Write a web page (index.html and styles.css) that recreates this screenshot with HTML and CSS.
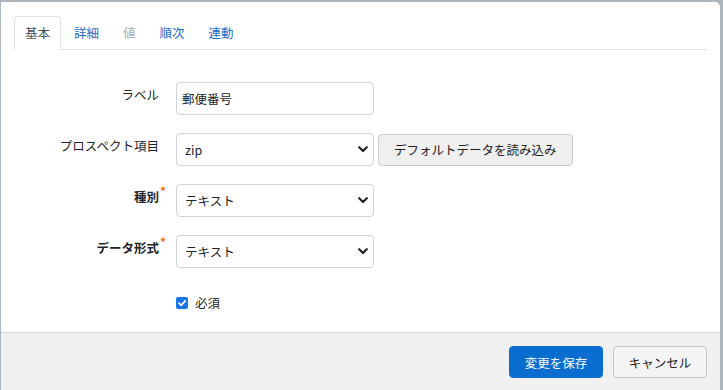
FILE: index.html
```html
<!DOCTYPE html>
<html lang="ja">
<head>
<meta charset="utf-8">
<link rel="stylesheet" href="styles.css">
</head>
<body>
<div class="dialog">
  <div class="dialog-body">
    <ul class="tabs">
      <li class="tab active">基本</li>
      <li class="tab">詳細</li>
      <li class="tab disabled">値</li>
      <li class="tab">順次</li>
      <li class="tab">連動</li>
    </ul>
    <div class="tab-content">
      <div class="row">
        <label class="label">ラベル</label>
        <div class="field"><input class="input" type="text" value="郵便番号"></div>
      </div>
      <div class="row">
        <label class="label">プロスペクト項目</label>
        <div class="field">
          <div class="select-wrap">
            <select class="select"><option>zip</option></select>
            <svg class="chevron" width="10" height="7" viewBox="0 0 10 7"><path d="M1.2 1.2 L5 5 L8.8 1.2" fill="none" stroke="#222" stroke-width="2.2" stroke-linecap="round" stroke-linejoin="round"/></svg>
          </div>
          <button class="btn btn-light">デフォルトデータを読み込み</button>
        </div>
      </div>
      <div class="row">
        <label class="label bold"><span class="req">種別</span></label>
        <div class="field">
          <div class="select-wrap">
            <select class="select"><option>テキスト</option></select>
            <svg class="chevron" width="10" height="7" viewBox="0 0 10 7"><path d="M1.2 1.2 L5 5 L8.8 1.2" fill="none" stroke="#222" stroke-width="2.2" stroke-linecap="round" stroke-linejoin="round"/></svg>
          </div>
        </div>
      </div>
      <div class="row">
        <label class="label bold"><span class="req">データ形式</span></label>
        <div class="field">
          <div class="select-wrap">
            <select class="select"><option>テキスト</option></select>
            <svg class="chevron" width="10" height="7" viewBox="0 0 10 7"><path d="M1.2 1.2 L5 5 L8.8 1.2" fill="none" stroke="#222" stroke-width="2.2" stroke-linecap="round" stroke-linejoin="round"/></svg>
          </div>
        </div>
      </div>
      <div class="row check-row">
        <div class="label"></div>
        <label class="check">
          <span class="checkbox"><svg width="10" height="10" viewBox="0 0 10 10"><path d="M2 5.2 L4.2 7.3 L8.2 2.8" fill="none" stroke="#fff" stroke-width="1.8" stroke-linecap="round" stroke-linejoin="round"/></svg></span>
          <span>必須</span>
        </label>
      </div>
    </div>
  </div>
  <div class="footer">
    <button class="btn btn-primary">変更を保存</button>
    <button class="btn btn-secondary">キャンセル</button>
  </div>
</div>
</body>
</html>
```
FILE: styles.css
```css
* { box-sizing: border-box; }
html, body { margin: 0; padding: 0; }
body {
  background: #adb5bd;
  font-family: "Noto Sans CJK JP", "Noto Sans", sans-serif;
  font-size: 12.5px;
  color: #212529;
  width: 723px;
  height: 390px;
  overflow: hidden;
}
.dialog {
  margin: 2px 3px 0 1px;
  height: 388px;
  background: #fff;
  border-top-right-radius: 5px;
  display: flex;
  flex-direction: column;
}
.dialog-body {
  flex: 1;
  padding: 14px 13px 0 13px;
}
.tabs {
  list-style: none;
  margin: 0;
  padding: 0;
  display: flex;
  border-bottom: 1px solid #dee2e6;
}
.tab {
  padding: 6px 10px;
  line-height: 20px;
  border: 1px solid transparent;
  border-top-left-radius: 4px;
  border-top-right-radius: 4px;
  margin-bottom: -1px;
  margin-right: 2px;
  color: #1a6cc8;
}
.tab.active {
  color: #495057;
  border-color: #dee2e6 #dee2e6 #fff;
  background: #fff;
}
.tab.disabled { color: #a2a9b0; }
.tab-content { padding-top: 32px; }
.row {
  display: flex;
  gap: 17px;
  margin-bottom: 18px;
  align-items: flex-start;
}
.label {
  width: 145px;
  flex: none;
  text-align: right;
  line-height: 20px;
  padding-top: 3px;
}
.label.bold { font-weight: 700; }
.req { position: relative; }
.req::after {
  content: "*";
  position: absolute;
  left: 100%;
  top: -6px;
  margin-left: 1px;
  color: #f07020;
  font-size: 12px;
  font-weight: 700;
}
.field { display: flex; gap: 4px; align-items: center; }
.input, .select {
  width: 198px;
  height: 33px;
  border: 1px solid #ced4da;
  border-radius: 4px;
  font-family: inherit;
  font-size: 12.5px;
  color: #212529;
  background: #fff;
  outline: none;
  margin: 0;
}
.input { padding: 0 5px; }
.select {
  appearance: none;
  -webkit-appearance: none;
  padding: 0 24px 0 8px;
}
.select-wrap { position: relative; display: flex; }
.chevron {
  position: absolute;
  right: 6px;
  top: 13px;
  pointer-events: none;
}
.btn {
  font-family: inherit;
  font-size: 12.5px;
  height: 32px;
  border-radius: 4px;
  padding: 0 15px;
  cursor: pointer;
  margin: 0;
}
.btn-light {
  background: #efefef;
  border: 1px solid #c9c9c9;
  color: #222;
}
.check-row { margin-top: 0; padding-top: 7px; }
.check {
  display: flex;
  align-items: center;
  gap: 7px;
  line-height: 20px;
}
.checkbox {
  width: 12px;
  height: 12px;
  border-radius: 2px;
  background: #1a73e8;
  display: flex;
  align-items: center;
  justify-content: center;
}
.footer {
  height: 58px;
  border-top: 1px solid #d8d8d8;
  background: #f0f0f0;
  display: flex;
  justify-content: flex-end;
  align-items: flex-start;
  gap: 10px;
  padding: 13px 13px 0 0;
}
.footer .btn { width: 94px; height: 32px; padding: 0; }
.btn-primary {
  background: #0a6ed1;
  border: 1px solid #0a6ed1;
  color: #fff;
}
.btn-secondary {
  background: #f4f4f4;
  border: 1px solid #c6c6c6;
  color: #222;
}
```
